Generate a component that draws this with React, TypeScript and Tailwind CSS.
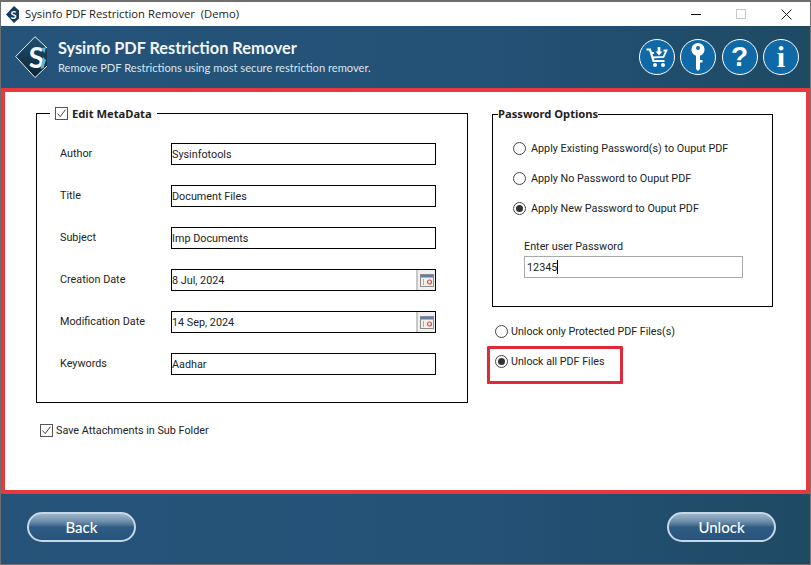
const UI_FONT = "font-['Roboto',sans-serif]";
const LEGEND_FONT = "font-['Noto_Sans',sans-serif] text-[11.2px] font-bold";

const META_FIELDS = [
  { label: "Author", value: "Sysinfotools" },
  { label: "Title", value: "Document Files" },
  { label: "Subject", value: "Imp Documents" },
  { label: "Creation Date", value: "8 Jul, 2024", date: true },
  { label: "Modification Date", value: "14 Sep, 2024", date: true },
  { label: "Keywords", value: "Aadhar" },
];

const PASSWORD_OPTIONS = [
  { label: "Apply Existing Password(s) to Ouput PDF", checked: false },
  { label: "Apply No Password to Ouput PDF", checked: false },
  { label: "Apply New Password to Ouput PDF", checked: true },
];

function HeaderLogo() {
  return (
    <svg width="33" height="43" viewBox="0 0 33 43" className="shrink-0">
      <defs>
        <linearGradient id="logoFill" x1="0" y1="0" x2="0" y2="1">
          <stop offset="0" stopColor="#24506f" />
          <stop offset="1" stopColor="#0b2336" />
        </linearGradient>
      </defs>
      <path d="M32 12 20 .7 .7 20.500 20 41.500 32 30Z" fill="url(#logoFill)" />
      <path d="M32 12 20 .7 .7 20.500 20 41.500 32 30" fill="none" stroke="#e8eef3" strokeWidth="1" />
      <text x="21.500" y="32" textAnchor="middle" fontSize="28" fontWeight="700" fontFamily="Lato, sans-serif" fill="#f4f8fb">
        S
      </text>
      <path d="M26 12.500 31 11 29.500 17Z M28 21 31 24 28.500 32 25.500 33Z" fill="#5ab3e0" />
    </svg>
  );
}

function TitleLogo() {
  return (
    <svg width="13" height="17" viewBox="0 0 13 17" className="shrink-0">
      <path d="M8 0 13 4.500V12.500L8 17 0 8.500Z" fill="#143a5c" />
      <text x="7.500" y="12.500" textAnchor="middle" fontSize="11" fontWeight="700" fontFamily="Lato, sans-serif" fill="#ffffff">
        S
      </text>
    </svg>
  );
}

function CircleIcon({ children }: { children: React.ReactNode }) {
  return (
    <div className="flex h-[36px] w-[36px] items-center justify-center rounded-full border-[1.5px] border-white bg-[#0f69a6]">
      {children}
    </div>
  );
}

function Checkbox() {
  return (
    <span className="flex h-[13px] w-[13px] shrink-0 items-center justify-center border border-[#555] bg-white">
      <svg width="11" height="11" viewBox="0 0 11 11">
        <path d="M1.500 5.500 4.200 8.600 9.500 1.600" fill="none" stroke="#444" strokeWidth="1" />
      </svg>
    </span>
  );
}

function Radio({ checked }: { checked: boolean }) {
  return (
    <span className="flex h-[13px] w-[13px] shrink-0 items-center justify-center rounded-full border border-[#444] bg-white">
      {checked && <span className="h-[7px] w-[7px] rounded-full bg-[#333]" />}
    </span>
  );
}

function PillButton({ label }: { label: string }) {
  return (
    <button className="flex h-[30px] w-[109px] items-center justify-center rounded-full border-2 border-[#c4d8e6] bg-[linear-gradient(180deg,#9db5ca_0%,#6f90ae_28%,#2f5c84_52%,#26547c_100%)] font-['Lato',sans-serif] text-[15px] font-medium text-white">
      {label}
    </button>
  );
}

function MetaRow({ label, value, date }: { label: string; value: string; date?: boolean }) {
  return (
    <div className="flex h-[22px] items-center">
      <span className="w-[111px] text-[10.8px] text-[#222]">{label}</span>
      <div className="flex h-[22px] w-[265px] items-center border border-black bg-white text-[10.8px] text-[#222]">
        <span className="flex-1 pt-[2px]">{value}</span>
        {date && (
          <span className="flex h-full w-[19px] items-center justify-center border-l-2 border-[#c8c8c8] bg-[#f0f0f0]">
            <svg width="14" height="13" viewBox="0 0 14 13">
              <rect x="0.5" y="0.5" width="13" height="12" fill="#f4efe4" stroke="#8b8b8b" />
              <rect x="1" y="1" width="12" height="2.500" fill="#5c7fae" />
              <circle cx="9.500" cy="8" r="2" fill="none" stroke="#c8505a" strokeWidth="1.200" />
              <path d="M3.500 5v6" stroke="#b9a98a" />
            </svg>
          </span>
        )}
      </div>
    </div>
  );
}

export default function App() {
  return (
    <div className={`flex h-[565px] w-[811px] flex-col overflow-hidden border border-t-2 border-[#6e6e6e] border-r-[#777] bg-white ${UI_FONT}`}>
      {/* window title bar */}
      <div className="flex h-[24px] items-center bg-white pl-[5px]">
        <TitleLogo />
        <span className="ml-[6px] font-['Open_Sans',sans-serif] text-[11.25px] text-[#222]">
          Sysinfo PDF Restriction Remover&nbsp;&nbsp;(Demo)
        </span>
        <div className="ml-auto flex items-center pr-[18px]">
          <span className="h-px w-[10px] bg-black" />
          <span className="ml-[35px] h-[10px] w-[10px] border border-[#c8c8c8]" />
          <svg className="ml-[35px]" width="11" height="11" viewBox="0 0 11 11">
            <path d="M.5.5l10 10M10.500.5l-10 10" stroke="#222" strokeWidth="1" />
          </svg>
        </div>
      </div>

      {/* app header */}
      <div className="flex h-[62px] items-center bg-[linear-gradient(90deg,#265379_0%,#245176_60%,#1e4a64_100%)] pl-[14px] pr-[11px]">
        <HeaderLogo />
        <div className="ml-[10px] -translate-y-px font-['Lato',sans-serif] text-white">
          <div className="text-[16.3px] font-bold leading-[22px] text-[#f2f6f9]">Sysinfo PDF Restriction Remover</div>
          <div className="text-[11.15px] leading-[17px] text-[#dbe6ee]">Remove PDF Restrictions using most secure restriction remover.</div>
        </div>
        <div className="ml-auto flex gap-[5.5px]">
          <CircleIcon>
            <svg width="24" height="24" viewBox="0 0 24 24" fill="none" stroke="#fff">
              <path d="M1.500 4.500h3.500l3.500 11.500h11" strokeWidth="2.200" />
              <path d="M6.500 8h2.500M7.500 12.500l11-.5 3-6.500h-3" strokeWidth="1.800" />
              <path d="M14 2v5" strokeWidth="2.800" />
              <path d="M10.500 6.500h7L14 10.500Z" fill="#fff" stroke="none" />
              <circle cx="10" cy="20" r="2" fill="#fff" stroke="none" />
              <circle cx="18" cy="20" r="2" fill="#fff" stroke="none" />
            </svg>
          </CircleIcon>
          <CircleIcon>
            <svg width="20" height="30" viewBox="0 0 20 30" fill="#fff">
              <path fillRule="evenodd" d="M10 1a6.500 6.500 0 0 1 2 12.700V27l-2 2-2-2V13.700A6.500 6.500 0 0 1 10 1Zm0 3a2 2 0 1 0 0 4 2 2 0 0 0 0-4Z" />
              <path d="M12 18h2.500v2.500H12z" />
            </svg>
          </CircleIcon>
          <CircleIcon>
            <span className="font-['Liberation_Sans',sans-serif] text-[28px] font-bold leading-none text-white">?</span>
          </CircleIcon>
          <CircleIcon>
            <span className="font-['Liberation_Serif',serif] text-[30px] font-bold leading-none text-white">i</span>
          </CircleIcon>
        </div>
      </div>

      {/* main panel */}
      <div className="flex h-[406px] border-4 border-[#e8383d] bg-white pt-[12px] text-[#222]">
        <div className="ml-[31px] w-[432px]">
          <fieldset className="h-[299px] border border-black pl-[23px]">
            <legend className={`-ml-[10px] flex h-[18px] items-center gap-[4px] px-[5px] ${LEGEND_FONT}`}>
              <Checkbox />
              <span className="translate-y-px">Edit MetaData</span>
            </legend>
            <div className="flex flex-col gap-[20px] pt-[21px]">
              {META_FIELDS.map((f) => (
                <MetaRow key={f.label} label={f.label} value={f.value} date={f.date} />
              ))}
            </div>
          </fieldset>
          <div className="ml-[4px] mt-[18px] flex items-center gap-[3px] text-[10.8px]">
            <Checkbox />
            <span className="pt-[2px]">Save Attachments in Sub Folder</span>
          </div>
        </div>

        <div className="ml-[24px] w-[281px] pt-[2px]">
          <fieldset className="h-[201px] border border-black">
            <legend className={`ml-[5px] flex h-[16px] items-center ${LEGEND_FONT}`}>Password Options</legend>
            <div className="flex flex-col gap-[15px] pl-[20px] pt-[19px]">
              {PASSWORD_OPTIONS.map((o) => (
                <div key={o.label} className="flex h-[15px] items-center gap-[5px] text-[10.8px]">
                  <Radio checked={o.checked} />
                  <span className="pt-[2px]">{o.label}</span>
                </div>
              ))}
            </div>
            <div className="pl-[31px] pt-[23px]">
              <div className="text-[10.8px] leading-[16px]">Enter user Password</div>
              <div className="mt-[1px] flex h-[22px] w-[219px] items-center border border-[#aaa] pl-[2px] text-[10.8px]">
                <span className="pt-[2px]">12345</span>
                <span className="h-[14px] w-px bg-black" />
              </div>
            </div>
          </fieldset>
          <div className="ml-[3px] mt-[17px] flex h-[15px] items-center gap-[3px] text-[10.7px]">
            <Radio checked={false} />
            <span className="pt-[2px]">Unlock only Protected PDF Files(s)</span>
          </div>
          <div className="-ml-[5px] mt-[7px] h-[38px] w-[136px] rounded-[1px] border-[3px] border-[#e02a3a] pl-[5px] pt-[5px]">
            <div className="flex h-[15px] items-center gap-[3px] text-[10.7px]">
              <Radio checked />
              <span className="pt-[2px]">Unlock all PDF Files</span>
            </div>
          </div>
        </div>
      </div>

      {/* footer */}
      <div className="flex flex-1 items-start justify-between bg-[linear-gradient(90deg,#265379_0%,#245176_60%,#1e4a64_100%)] pl-[26px] pr-[34px] pt-[18px]">
        <PillButton label="Back" />
        <PillButton label="Unlock" />
      </div>
    </div>
  );
}
